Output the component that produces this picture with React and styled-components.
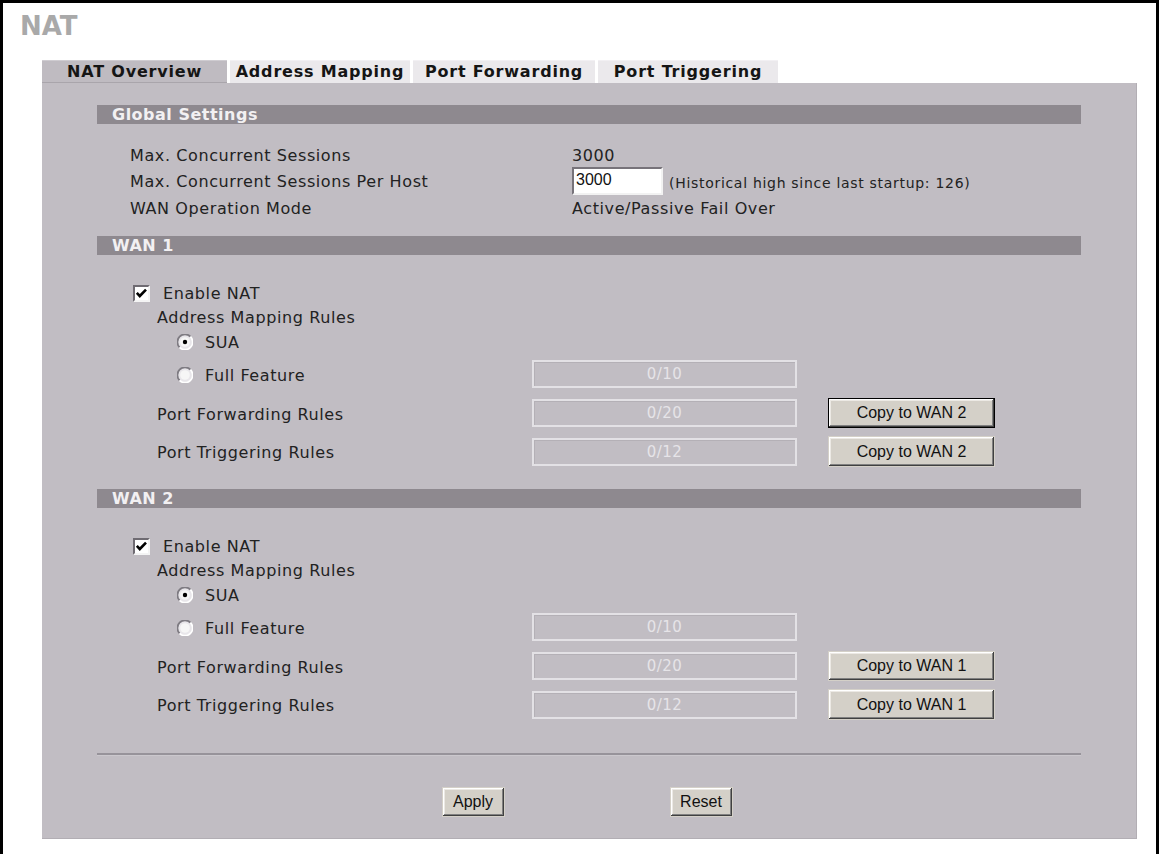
import React from "react";
import styled, { createGlobalStyle } from "styled-components";

const Global = createGlobalStyle`
  html, body { margin: 0; padding: 0; background: #ffffff; }
  body { font-family: "DejaVu Sans", Verdana, sans-serif; color: #222; }
`;

const Frame = styled.div`
  box-sizing: border-box;
  width: 1159px;
  min-height: 854px;
  border: 3px solid #000;
  border-bottom: none;
  padding-top: 10px;
`;

const Title = styled.h1`
  margin: 0 0 0 17px;
  font-family: "DejaVu Sans", Verdana, sans-serif;
  font-weight: bold;
  font-size: 26px;
  line-height: 26px;
  color: #a9a9a9;
`;

const Content = styled.div`
  margin: 21px 0 0 39px;
  width: 1095px;
`;

const TabBar = styled.div`
  display: flex;
  gap: 3px;
  height: 23px;
`;

const Tab = styled.div`
  box-sizing: border-box;
  width: ${(p) => p.$w}px;
  height: 23px;
  display: flex;
  align-items: center;
  justify-content: center;
  font-weight: bold;
  font-size: 16px;
  letter-spacing: 0.8px;
  color: #151515;
  background: ${(p) => (p.$active ? "#bfbbc1" : "#ebe9ec")};
  border-top: 1px solid ${(p) => (p.$active ? "#cfccd1" : "#f2f0f3")};
  border-bottom: 1px solid ${(p) => (p.$active ? "#a9a5ab" : "#ebe9ec")};
`;

const Panel = styled.div`
  background: #c1bdc3;
  padding: 22px 55px 21px;
  border-right: 1px solid #b2aeb4;
  border-bottom: 1px solid #b2aeb4;
`;

const SectionBar = styled.div`
  height: 19px;
  background: #8e898f;
  color: #f2f0f2;
  font-weight: bold;
  font-size: 16px;
  letter-spacing: 0.5px;
  line-height: 19px;
  padding-left: 15px;
  margin-top: ${(p) => p.$mt || 0}px;
`;

const Text = styled.span`
  font-size: 16px;
  letter-spacing: 0.6px;
  color: #222;
  white-space: nowrap;
`;

const InfoRow = styled.div`
  display: grid;
  grid-template-columns: 442px 1fr;
  align-items: center;
  height: ${(p) => p.$h}px;
  margin-top: ${(p) => p.$mt || 0}px;
  padding-left: 33px;
`;

const ValueCell = styled.div`
  display: flex;
  align-items: center;
  gap: 6px;
`;

const NumberInput = styled.input`
  box-sizing: border-box;
  width: 91px;
  height: 28px;
  margin: 0;
  padding: 0 0 2px 2px;
  background: #fff;
  border-style: solid;
  border-width: 2px;
  border-color: #77737a #f2f2f2 #f2f2f2 #77737a;
  font-family: "Liberation Sans", Arial, sans-serif;
  font-size: 16px;
  color: #111;
  outline: none;
`;

const Note = styled.span`
  font-size: 14px;
  letter-spacing: 0.7px;
  color: #222;
  margin-top: 4px;
  white-space: nowrap;
`;

const LineRow = styled.div`
  display: flex;
  align-items: center;
  height: 24px;
  margin-top: ${(p) => p.$mt || 0}px;
  padding-left: ${(p) => p.$indent}px;
  gap: ${(p) => p.$gap || 0}px;
`;

const RuleRow = styled.div`
  display: grid;
  grid-template-columns: 404px 265px 167px;
  column-gap: 31px;
  align-items: center;
  height: 28px;
  margin-top: ${(p) => p.$mt || 0}px;
`;

const RuleLabel = styled.div`
  display: flex;
  align-items: center;
  gap: 12px;
  padding-left: ${(p) => p.$indent}px;
  padding-top: 2px;
`;

const CountBox = styled.div`
  box-sizing: border-box;
  height: 28px;
  border: 2px solid #e3e1e5;
  box-shadow: inset 1px 1px 0 #b4b0b6;
  display: flex;
  align-items: center;
  justify-content: center;
  font-size: 15px;
  letter-spacing: 0.4px;
  color: #e6e4e8;
`;

const WinButton = styled.button`
  box-sizing: border-box;
  height: ${(p) => p.$h || 30}px;
  width: ${(p) => p.$w}px;
  margin: 0;
  padding: 0;
  background: #d4d0c8;
  border: 1px solid ${(p) => (p.$focused ? "#000" : "transparent")};
  box-shadow: inset -1px -1px 0 #404040, inset 1px 1px 0 #ffffff,
    inset -2px -2px 0 #808080, inset 2px 2px 0 #ece9e4;
  font-family: "Liberation Sans", Arial, sans-serif;
  font-size: 16px;
  color: #111;
  cursor: default;
`;

const Separator = styled.div`
  height: 2px;
  margin-top: 36px;
  background: #97939a;
  border-bottom: 1px solid #cbc8cd;
`;

const ActionBar = styled.div`
  display: flex;
  justify-content: center;
  gap: 165px;
  margin-top: 31px;
  padding-right: 4px;
`;

const CheckBoxBox = styled.span`
  box-sizing: border-box;
  width: 17px;
  height: 17px;
  display: inline-flex;
  align-items: center;
  justify-content: center;
  background: #fff;
  border-style: solid;
  border-width: 2px;
  border-color: #6f6b72 #f4f4f4 #f4f4f4 #6f6b72;
`;

const CheckBox = () => (
  <CheckBoxBox>
    <svg width="13" height="13" viewBox="0 0 13 13">
      <path d="M1.8 5.8 L4.8 9 L11 2.6" fill="none" stroke="#000" strokeWidth="2.6" />
    </svg>
  </CheckBoxBox>
);

const Radio = ({ on }) => (
  <svg width="16" height="16" viewBox="0 0 16 16">
    <circle cx="8" cy="8" r="7" fill="#e8e6ea" />
    <path d="M2.6 13.4 A7 7 0 0 1 13.4 2.6" fill="none" stroke="#7e7b82" strokeWidth="1.8" />
    <path d="M13.4 2.6 A7 7 0 0 1 2.6 13.4" fill="none" stroke="#ffffff" strokeWidth="1.8" />
    <circle cx="8" cy="8" r="4.8" fill="#f6f6f6" />
    {on && <circle cx="8" cy="8" r="2.2" fill="#000" />}
  </svg>
);

const WanSection = ({ name, target }) => (
  <>
    <SectionBar $mt={name === "WAN 1" ? 16 : 25}>{name}</SectionBar>
    <LineRow $mt={26} $indent={36} $gap={13}>
      <CheckBox />
      <Text>Enable NAT</Text>
    </LineRow>
    <LineRow $indent={60}>
      <Text>Address Mapping Rules</Text>
    </LineRow>
    <LineRow $mt={1} $indent={80} $gap={12}>
      <Radio on />
      <Text>SUA</Text>
    </LineRow>
    <RuleRow $mt={6}>
      <RuleLabel $indent={80}>
        <Radio />
        <Text>Full Feature</Text>
      </RuleLabel>
      <CountBox>0/10</CountBox>
    </RuleRow>
    <RuleRow $mt={10}>
      <RuleLabel $indent={60}>
        <Text>Port Forwarding Rules</Text>
      </RuleLabel>
      <CountBox>0/20</CountBox>
      <WinButton $w={167} $focused={target === "WAN 2"}>Copy to {target}</WinButton>
    </RuleRow>
    <RuleRow $mt={10}>
      <RuleLabel $indent={60}>
        <Text>Port Triggering Rules</Text>
      </RuleLabel>
      <CountBox>0/12</CountBox>
      <WinButton $w={167} $h={31}>Copy to {target}</WinButton>
    </RuleRow>
  </>
);

export default function App() {
  return (
    <>
      <Global />
      <Frame>
        <Title>NAT</Title>
        <Content>
          <TabBar>
            <Tab $w={185} $active>NAT Overview</Tab>
            <Tab $w={180}>Address Mapping</Tab>
            <Tab $w={182}>Port Forwarding</Tab>
            <Tab $w={180}>Port Triggering</Tab>
          </TabBar>
          <Panel>
            <SectionBar>Global Settings</SectionBar>
            <InfoRow $h={24} $mt={19}>
              <Text>Max. Concurrent Sessions</Text>
              <ValueCell>
                <Text>3000</Text>
              </ValueCell>
            </InfoRow>
            <InfoRow $h={28}>
              <Text>Max. Concurrent Sessions Per Host</Text>
              <ValueCell>
                <NumberInput defaultValue="3000" />
                <Note>(Historical high since last startup: 126)</Note>
              </ValueCell>
            </InfoRow>
            <InfoRow $h={24} $mt={1}>
              <Text>WAN Operation Mode</Text>
              <ValueCell>
                <Text>Active/Passive Fail Over</Text>
              </ValueCell>
            </InfoRow>
            <WanSection name="WAN 1" target="WAN 2" />
            <WanSection name="WAN 2" target="WAN 1" />
            <Separator />
            <ActionBar>
              <WinButton $w={63}>Apply</WinButton>
              <WinButton $w={63}>Reset</WinButton>
            </ActionBar>
          </Panel>
        </Content>
      </Frame>
    </>
  );
}
